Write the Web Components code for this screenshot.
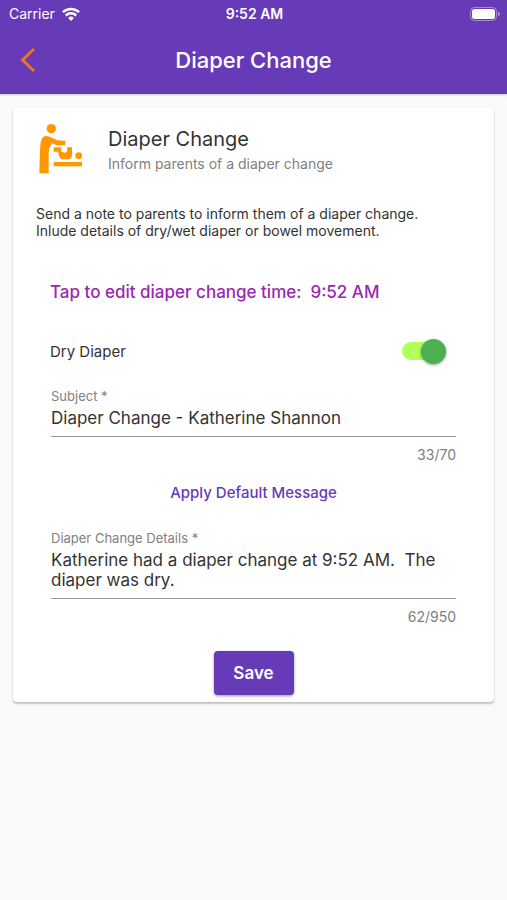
<!DOCTYPE html>
<html lang="en">
<head>
<meta charset="utf-8">
<meta name="viewport" content="width=device-width, initial-scale=1">
<title>Diaper Change</title>
<style>
  body {
    margin: 0;
    min-height: 100vh;
    background: #fafafa;
    color: #333;
    font-family: Inter, "Liberation Sans", sans-serif;
    font-size: 17px;
    --primary: #673ab7;
    --accent: #9c27b0;
    --hint: #808080;
  }
</style>
</head>
<body>
<diaper-app></diaper-app>

<script>
class StatusBar extends HTMLElement {
  constructor() {
    super();
    this.attachShadow({ mode: 'open' });
    this.shadowRoot.innerHTML = `
      <style>
        :host {
          display: grid;
          grid-template-columns: 1fr auto 1fr;
          align-items: center;
          height: 27px;
          padding: 0 7px 0 9px;
          font-size: 14px;
          line-height: 16px;
        }
        .carrier {
          display: flex;
          align-items: center;
          gap: 7px;
        }
        .time { font-weight: 600; }
        .battery { justify-self: end; }
        svg { display: block; }
      </style>
      <span class="carrier">
        <slot name="carrier"></slot>
        <svg width="18" height="14" viewBox="0 0 18 14" fill="none" stroke="#fff" stroke-width="2.5" aria-hidden="true">
          <path d="M0.9 5.2A11.6 11.6 0 0 1 17.1 5.2"/>
          <path d="M3.8 8.5A7.4 7.4 0 0 1 14.2 8.5"/>
          <path d="M9 14L6.1 11A4.1 4.1 0 0 1 11.9 11Z" fill="#fff" stroke="none"/>
        </svg>
      </span>
      <span class="time"><slot name="time"></slot></span>
      <svg class="battery" width="30" height="14" viewBox="0 0 30 14" aria-hidden="true">
        <rect x="0.5" y="0.5" width="26" height="13" rx="4" fill="none" stroke="#fff" stroke-opacity=".4"/>
        <rect x="2" y="2" width="23" height="10" rx="2.5" fill="#fff"/>
        <path d="M28 4.8Q30 5.4 30 7T28 9.2Z" fill="#fff" fill-opacity=".45"/>
      </svg>
    `;
  }
}

class AppBar extends HTMLElement {
  constructor() {
    super();
    this.attachShadow({ mode: 'open' });
    this.shadowRoot.innerHTML = `
      <style>
        :host {
          display: block;
          padding-bottom: 2px;
          background: var(--primary);
          color: #fff;
          box-shadow: 0 1px 2px rgba(0, 0, 0, .2);
        }
        .row {
          display: grid;
          grid-template-columns: 56px 1fr 56px;
          align-items: center;
          height: 65px;
        }
        button {
          width: 56px;
          height: 56px;
          padding: 0 0 0 20px;
          border: 0;
          background: none;
          cursor: pointer;
        }
        svg { display: block; }
        h1 {
          margin: 0;
          font-size: 22px;
          font-weight: 500;
          line-height: 28px;
          text-align: center;
        }
      </style>
      <slot name="status"></slot>
      <div class="row">
        <button type="button" aria-label="Back">
          <svg width="16" height="26" viewBox="0 0 16 26" fill="none" stroke="#ee7420" stroke-width="3">
            <path d="M14 2L2.6 13L14 24"/>
          </svg>
        </button>
        <h1><slot></slot></h1>
      </div>
    `;
  }
}

class CardHeader extends HTMLElement {
  constructor() {
    super();
    this.attachShadow({ mode: 'open' });
    this.shadowRoot.innerHTML = `
      <style>
        :host {
          display: flex;
          align-items: flex-end;
          gap: 22px;
          padding: 16px 25px 0;
        }
        svg { flex: none; }
        h2 {
          margin: 0;
          font-size: 20px;
          font-weight: 400;
          line-height: 28px;
        }
        p {
          margin: 0;
          color: var(--hint);
          font-size: 14px;
          line-height: 22px;
        }
      </style>
      <svg width="48" height="52" viewBox="24 24 144 156" fill="#ff9800" aria-hidden="true">
        <circle cx="64" cy="41" r="14"/>
        <path d="M28 175L30 108Q31 78 37 68Q43 60 55 64L82 76L106 77V91H80L65 85Q57 98 56 114V175Z"/>
        <path d="M71 97H94V110H98Q100 113 104 113T111 110V97H126V120Q126 133 113 133H100Q90 133 87 122L84 110H71Z"/>
        <circle cx="146" cy="122" r="10"/>
        <path d="M71 141H156V154H71Z"/>
      </svg>
      <div>
        <h2><slot></slot></h2>
        <p><slot name="subtitle"></slot></p>
      </div>
    `;
  }
}

class ToggleRow extends HTMLElement {
  constructor() {
    super();
    this.attachShadow({ mode: 'open' });
    this.shadowRoot.innerHTML = `
      <style>
        :host {
          display: flex;
          align-items: center;
          justify-content: space-between;
          height: 40px;
          font-size: 15px;
        }
        input {
          appearance: none;
          display: flex;
          align-items: center;
          width: 44px;
          height: 18px;
          margin: 0 11px 0 0;
          border-radius: 9px;
          background: #bdbdbd;
          cursor: pointer;
        }
        input::before {
          content: "";
          width: 25px;
          height: 25px;
          border-radius: 50%;
          background: #fafafa;
          box-shadow: 0 1px 3px rgba(0, 0, 0, .4);
        }
        input:checked {
          justify-content: flex-end;
          background: #b2ff59;
        }
        input:checked::before { background: #4caf50; }
      </style>
      <label for="toggle"><slot></slot></label>
      <input id="toggle" type="checkbox" role="switch" checked>
    `;
  }
}

class TextField extends HTMLElement {
  constructor() {
    super();
    this.attachShadow({ mode: 'open' });
  }

  connectedCallback() {
    const max = this.getAttribute('max');
    const rows = this.getAttribute('rows');
    const control = rows
      ? `<textarea id="field" rows="${rows}" maxlength="${max}" required></textarea>`
      : `<input id="field" type="text" maxlength="${max}" required>`;

    this.shadowRoot.innerHTML = `
      <style>
        :host {
          display: block;
          padding: 0 1px;
        }
        label {
          display: block;
          color: var(--hint);
          font-size: 13px;
          line-height: 16px;
        }
        input, textarea {
          display: block;
          box-sizing: border-box;
          width: 100%;
          margin: 0;
          padding: 4px 0 8px;
          border: 0;
          border-bottom: 1px solid #999;
          border-radius: 0;
          outline: 0;
          background: none;
          color: inherit;
          font: inherit;
          line-height: 20px;
          resize: none;
          overflow: hidden;
        }
        input { height: 33px; }
        .count {
          color: var(--hint);
          font-size: 14px;
          line-height: 20px;
          margin-top: 8px;
          text-align: right;
        }
      </style>
      <label for="field">${this.getAttribute('label')} *</label>
      ${control}
      <div class="count"></div>
    `;

    const field = this.shadowRoot.querySelector('#field');
    const count = this.shadowRoot.querySelector('.count');
    const update = () => {
      count.textContent = `${field.value.length}/${max}`;
    };
    field.value = this.getAttribute('value');
    field.addEventListener('input', update);
    update();
  }
}

class AppButton extends HTMLElement {
  constructor() {
    super();
    this.attachShadow({ mode: 'open' });
    this.shadowRoot.innerHTML = `
      <style>
        :host { display: block; }
        button {
          display: block;
          padding: 0;
          border: 0;
          background: none;
          color: var(--primary);
          font: inherit;
          font-size: 15px;
          font-weight: 500;
          line-height: 20px;
          white-space: pre;
          cursor: pointer;
        }
        :host([kind="time"]) button {
          color: var(--accent);
          font-size: 17px;
        }
        :host([kind="raised"]) button {
          min-width: 80px;
          height: 44px;
          padding: 0 16px;
          border-radius: 4px;
          background: var(--primary);
          color: #fff;
          font-size: 17px;
          font-weight: 600;
          box-shadow: 0 1px 3px rgba(0, 0, 0, .4);
        }
      </style>
      <button type="button"><slot></slot></button>
    `;
  }
}

class DiaperApp extends HTMLElement {
  constructor() {
    super();
    this.attachShadow({ mode: 'open' });
    this.shadowRoot.innerHTML = `
      <style>
        :host { display: block; }
        .card {
          margin: 13px 13px 0;
          padding-bottom: 7px;
          border-radius: 4px;
          background: #fff;
          box-shadow: 0 2px 2px rgba(0, 0, 0, .22), 0 0 2px rgba(0, 0, 0, .08);
        }
        .intro {
          margin: 30px 23px 0;
          font-size: 14px;
          line-height: 17px;
        }
        form {
          display: flex;
          flex-direction: column;
          margin: 43px 37px 0;
        }
        toggle-row { margin: 29px 0 17px; }
        .center { align-self: center; }
        .apply { margin: 18px 0 27px; }
        .save { margin-top: 24px; }
      </style>
      <app-bar>
        <status-bar slot="status">
          <span slot="carrier">Carrier</span>
          <span slot="time">9:52 AM</span>
        </status-bar>
        Diaper Change
      </app-bar>
      <main class="card">
        <card-header>
          Diaper Change
          <span slot="subtitle">Inform parents of a diaper change</span>
        </card-header>
        <p class="intro">Send a note to parents to inform them of a diaper change.<br>Inlude details of dry/wet diaper or bowel movement.</p>
        <form>
          <app-button kind="time">Tap to edit diaper change time:  9:52 AM</app-button>
          <toggle-row>Dry Diaper</toggle-row>
          <text-field label="Subject" max="70" value="Diaper Change - Katherine Shannon"></text-field>
          <app-button class="center apply">Apply Default Message</app-button>
          <text-field label="Diaper Change Details" max="950" rows="2" value="Katherine had a diaper change at 9:52 AM.  The diaper was dry."></text-field>
          <app-button class="center save" kind="raised">Save</app-button>
        </form>
      </main>
    `;
  }
}

customElements.define('status-bar', StatusBar);
customElements.define('app-bar', AppBar);
customElements.define('card-header', CardHeader);
customElements.define('toggle-row', ToggleRow);
customElements.define('text-field', TextField);
customElements.define('app-button', AppButton);
customElements.define('diaper-app', DiaperApp);
</script>
</body>
</html>
